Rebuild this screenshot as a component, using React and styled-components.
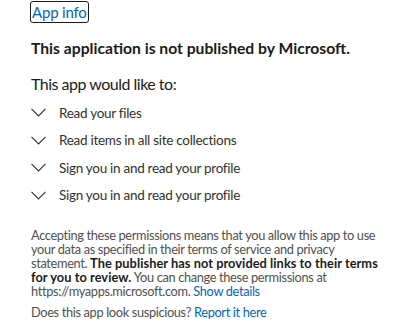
import styled, { createGlobalStyle } from 'styled-components';

const GlobalStyle = createGlobalStyle`
  * {
    margin: 0;
    padding: 0;
    box-sizing: border-box;
  }
  body {
    background: #ffffff;
    font-family: Lato, 'Noto Sans', sans-serif;
    color: #1b1b1b;
    overflow: hidden;
  }
`;

const Page = styled.div`
  width: 400px;
  height: 328px;
  overflow: hidden;
  padding: 0 18px 0 31px;
`;

const Title = styled.div`
  font-size: 15px;
  line-height: 20px;
  margin-top: -19px;
  height: 21px;
  overflow: hidden;
  padding-left: 13px;
`;

const AppInfo = styled.a`
  display: inline-block;
  font-size: 15px;
  letter-spacing: -0.2px;
  line-height: 20px;
  color: #0067b8;
  text-decoration: none;
  outline: 1px solid #1b1b1b;
  border-radius: 2px;
  padding: 0 1px;
`;

const Heading = styled.h2`
  font-size: 15.7px;
  font-weight: 700;
  line-height: 20px;
  margin-top: 16px;
`;

const Lead = styled.p`
  font-size: 16px;
  letter-spacing: -0.5px;
  line-height: 22px;
  margin-top: 15px;
`;

const PermList = styled.ul`
  list-style: none;
  margin-top: 4px;
`;

const PermItem = styled.li`
  display: flex;
  align-items: center;
  gap: 13px;
  height: 27.5px;
  font-size: 13.5px;
  letter-spacing: -0.28px;
  color: #323130;
`;

const Chevron = () => (
  <svg width="15" height="9" viewBox="0 0 15 9" fill="none">
    <polyline points="0.5,0.8 7.5,8 14.5,0.8" stroke="#323130" strokeWidth="1.1" />
  </svg>
);

const Note = styled.p`
  font-size: 12.8px;
  letter-spacing: -0.35px;
  line-height: 14px;
  color: #505050;
  margin-top: 19px;

  b {
    color: #1b1b1b;
    letter-spacing: 0.05px;
  }
`;

const Link = styled.a`
  color: #0067b8;
  text-decoration: none;
`;

const Suspicious = styled.p`
  font-size: 12.8px;
  letter-spacing: -0.35px;
  line-height: 16px;
  color: #505050;
  margin-top: 6px;
`;

const permissions = [
  'Read your files',
  'Read items in all site collections',
  'Sign you in and read your profile',
  'Sign you in and read your profile',
];

export default function App() {
  return (
    <>
      <GlobalStyle />
      <Page>
        <Title>app_test_sample_app</Title>
        <AppInfo href="#">App info</AppInfo>
        <Heading>This application is not published by Microsoft.</Heading>
        <Lead>This app would like to:</Lead>
        <PermList>
          {permissions.map((p, i) => (
            <PermItem key={i}>
              <Chevron />
              {p}
            </PermItem>
          ))}
        </PermList>
        <Note>
          Accepting these permissions means that you allow this app to use your
          data as specified in their terms of service and privacy statement.{' '}
          <b>The publisher has not provided links to their terms for you to review.</b>{' '}
          You can change these permissions at https://myapps.microsoft.com.{' '}
          <Link href="#">Show details</Link>
        </Note>
        <Suspicious>
          Does this app look suspicious? <Link href="#">Report it here</Link>
        </Suspicious>
      </Page>
    </>
  );
}
